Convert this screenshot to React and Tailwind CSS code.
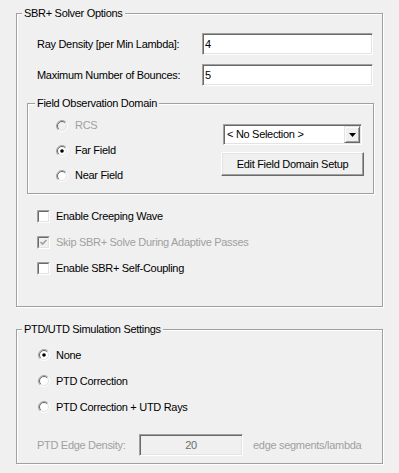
import React from "react";

const font = { fontFamily: '"Liberation Sans", Arial, sans-serif' };

function Radio({ checked = false, disabled = false }) {
  return (
    <svg width="12" height="12" viewBox="0 0 12 12" className="shrink-0">
      <circle cx="6" cy="6" r="4.5" fill={disabled ? "#f0f0f0" : "#ffffff"} />
      <path d="M2.111 9.889 A5.5 5.5 0 0 1 9.889 2.111" fill="none" stroke="#a0a0a0" strokeWidth="1" />
      <path d="M9.889 2.111 A5.5 5.5 0 0 1 2.111 9.889" fill="none" stroke="#ffffff" strokeWidth="1" />
      <path d="M2.818 9.182 A4.5 4.5 0 0 1 9.182 2.818" fill="none" stroke="#696969" strokeWidth="1" />
      <path d="M9.182 2.818 A4.5 4.5 0 0 1 2.818 9.182" fill="none" stroke="#e3e3e3" strokeWidth="1" />
      {checked && <circle cx="6" cy="6" r="1.8" fill="#000000" />}
    </svg>
  );
}

function Check({ checked = false, disabled = false }) {
  return (
    <svg width="13" height="13" viewBox="0 0 13 13" className="shrink-0">
      <rect x="0" y="0" width="13" height="13" fill="#ffffff" />
      <rect x="1" y="1" width="11" height="11" fill="#e3e3e3" />
      <path d="M0.5 12.5 V0.5 H12.5" fill="none" stroke="#a0a0a0" />
      <path d="M1.5 11.5 V1.5 H11.5" fill="none" stroke="#696969" />
      <rect x="2" y="2" width="9" height="9" fill={disabled ? "#f0f0f0" : "#ffffff"} />
      {checked && (
        <path d="M3.5 6 L5.5 8 L9.5 4" fill="none" stroke={disabled ? "#a0a0a0" : "#000000"} strokeWidth="1.6" />
      )}
    </svg>
  );
}

function TextBox({ value, className = "", disabled = false }) {
  return (
    <div
      className={
        "flex items-center border border-t-[#a0a0a0] border-l-[#a0a0a0] border-b-white border-r-white shadow-[inset_1px_1px_0_#696969,inset_-1px_-1px_0_#e3e3e3] " +
        (disabled ? "bg-[#f0f0f0] justify-center text-[#6d6d6d] " : "bg-white pl-[2px] text-black ") +
        className
      }
    >
      {value}
    </div>
  );
}

function Group({ title, className = "", children }) {
  return (
    <fieldset
      className={
        "border border-[#a0a0a0] shadow-[inset_1px_1px_0_#ffffff,1px_1px_0_#ffffff] m-0 p-0 min-w-0 " + className
      }
    >
      <legend className="bg-[#f0f0f0] px-[2px] leading-[14px] ml-[5px] text-black">{title}</legend>
      {children}
    </fieldset>
  );
}

export default function App() {
  return (
    <div
      className="w-[399px] h-[473px] bg-[#f0f0f0] pl-[16px] pt-[6px] text-[11px] tracking-[-0.3px] text-black overflow-hidden"
      style={font}
    >
      <Group title="SBR+ Solver Options" className="w-[367px] h-[301px]">
        <div className="flex items-center mt-[13px] h-[22px] pl-[20px]">
          <span className="w-[165px]">Ray Density [per Min Lambda]:</span>
          <TextBox value="4" className="w-[171px] h-[22px]" />
        </div>
        <div className="flex items-center mt-[9px] h-[22px] pl-[20px]">
          <span className="w-[165px]">Maximum Number of Bounces:</span>
          <TextBox value="5" className="w-[171px] h-[22px]" />
        </div>

        <fieldset className="border border-[#a0a0a0] shadow-[inset_1px_1px_0_#ffffff,1px_1px_0_#ffffff] mt-[10px] ml-[10px] w-[347px] h-[98px] p-0 min-w-0">
          <legend className="bg-[#f0f0f0] px-[2px] leading-[14px] ml-[7px]">Field Observation Domain</legend>
          <div className="flex">
            <div className="flex flex-col pt-[3px] pl-[28px]">
              <div className="flex items-center h-[25px] gap-[6px] text-[#a0a0a0]">
                <span className="w-[13px] flex"><Radio disabled /></span>
                <span>RCS</span>
              </div>
              <div className="flex items-center h-[25px] gap-[6px]">
                <span className="w-[13px] flex"><Radio checked /></span>
                <span>Far Field</span>
              </div>
              <div className="flex items-center h-[25px] gap-[6px]">
                <span className="w-[13px] flex"><Radio /></span>
                <span>Near Field</span>
              </div>
            </div>
            <div className="ml-auto flex flex-col items-end pt-[14px] mr-[9px]">
              <div className="mr-[2px] w-[139px] h-[21px] flex items-center bg-white border border-t-[#a0a0a0] border-l-[#a0a0a0] border-b-white border-r-white shadow-[inset_1px_1px_0_#696969,inset_-1px_-1px_0_#e3e3e3] p-[1px]">
                <span className="flex-1 pl-[2px]">&lt; No Selection &gt;</span>
                <span className="w-[16px] h-[17px] flex items-center justify-center bg-[#f0f0f0] border border-t-[#e3e3e3] border-l-[#e3e3e3] border-r-[#696969] border-b-[#696969] shadow-[inset_1px_1px_0_#ffffff,inset_-1px_-1px_0_#a0a0a0]">
                  <svg width="7" height="4" viewBox="0 0 7 4">
                    <path d="M0 0 H7 L3.5 4 Z" fill="#000" />
                  </svg>
                </span>
              </div>
              <div className="mt-[7px] w-[143px] h-[24px] flex items-center justify-center bg-[#f0f0f0] border border-t-white border-l-white border-r-[#696969] border-b-[#696969] shadow-[inset_-1px_-1px_0_#a0a0a0,inset_1px_1px_0_#e3e3e3]">
                Edit Field Domain Setup
              </div>
            </div>
          </div>
        </fieldset>

        <div className="flex flex-col mt-[9px] pl-[20px]">
          <div className="flex items-center h-[26px] gap-[6px]">
            <Check />
            <span>Enable Creeping Wave</span>
          </div>
          <div className="flex items-center h-[26px] gap-[6px] text-[#a0a0a0]">
            <Check checked disabled />
            <span>Skip SBR+ Solve During Adaptive Passes</span>
          </div>
          <div className="flex items-center h-[26px] gap-[6px]">
            <Check />
            <span>Enable SBR+ Self-Coupling</span>
          </div>
        </div>
      </Group>

      <Group title="PTD/UTD Simulation Settings" className="w-[367px] h-[142px] mt-[15px]">
        <div className="flex flex-col pt-[6px] pl-[20px]">
          <div className="flex items-center h-[26px] gap-[6px]">
            <span className="w-[13px] flex justify-end"><Radio checked /></span>
            <span>None</span>
          </div>
          <div className="flex items-center h-[26px] gap-[6px]">
            <span className="w-[13px] flex justify-end"><Radio /></span>
            <span>PTD Correction</span>
          </div>
          <div className="flex items-center h-[26px] gap-[6px]">
            <span className="w-[13px] flex justify-end"><Radio /></span>
            <span>PTD Correction + UTD Rays</span>
          </div>
        </div>
        <div className="flex items-center mt-[14px] h-[22px] pl-[20px] text-[#a0a0a0]">
          <span className="w-[102px]">PTD Edge Density:</span>
          <TextBox value="20" disabled className="w-[104px] h-[22px]" />
          <span className="ml-[10px]">edge segments/lambda</span>
        </div>
      </Group>
    </div>
  );
}
